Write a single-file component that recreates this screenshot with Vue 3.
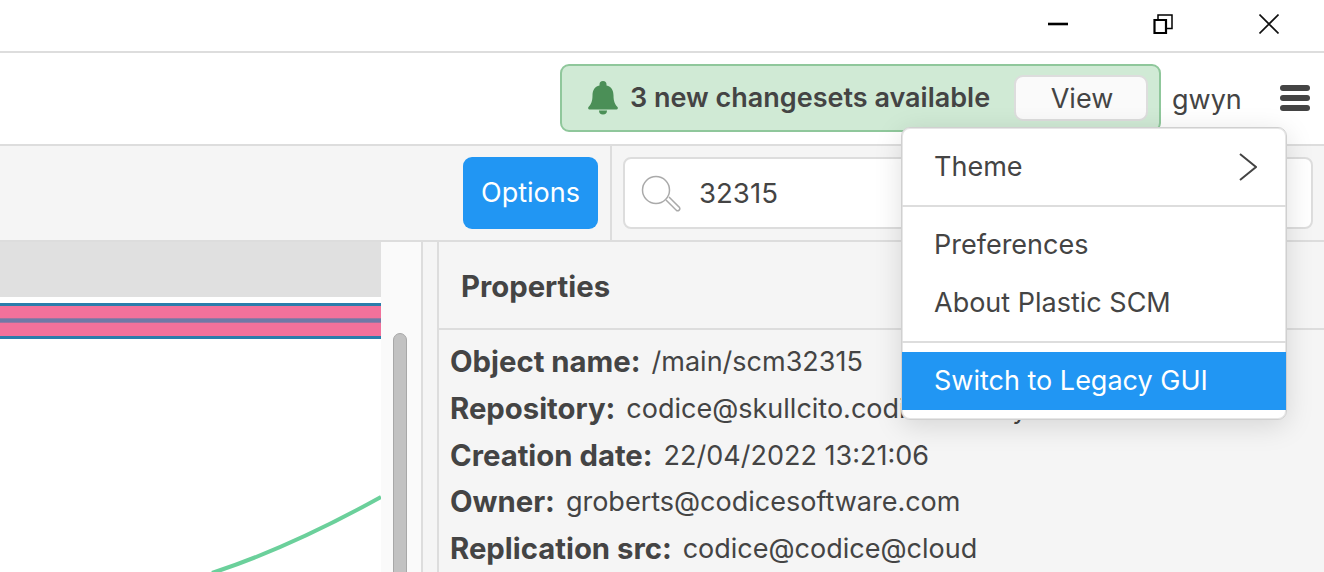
<script setup>
const rows = [
  { label: 'Object name:', value: '/main/scm32315' },
  { label: 'Repository:', value: 'codice@skullcito.codicefactory' },
  { label: 'Creation date:', value: '22/04/2022 13:21:06' },
  { label: 'Owner:', value: 'groberts@codicesoftware.com' },
  { label: 'Replication src:', value: 'codice@codice@cloud' },
]
</script>

<template>
  <div class="app">
    <header class="titlebar">
      <svg class="win min" width="20" height="20" viewBox="0 0 20 20"><path d="M0 10H20" stroke="#000" stroke-width="2.600" fill="none" /></svg>
      <svg class="win" width="20" height="20" viewBox="0 0 20 20"><path d="M1.500 6H13V19H1.500Z" stroke="#000" stroke-width="2.200" fill="none" /><path d="M5 5V1H19V14.500H13.500" stroke="#000" stroke-width="1.500" fill="none" /></svg>
      <svg class="win" width="20" height="20" viewBox="0 0 20 20"><path d="M0.500 0.500L19.500 19.500M19.500 0.500L0.500 19.500" stroke="#111" stroke-width="1.600" fill="none" /></svg>
    </header>

    <div class="topbar">
      <div class="banner">
        <svg class="bell" width="32" height="34" viewBox="0 0 32 34">
          <path d="M16 0a3.500 3.500 0 0 1 3.500 3.500v1c5 1.200 7 5 7 10 0 6 1.500 9 4 11.500.8.800.3 2.500-1 2.500H2.500c-1.300 0-1.800-1.700-1-2.500C4 23.500 5.500 20.500 5.500 14.500c0-5 2-8.800 7-10v-1A3.500 3.500 0 0 1 16 0Z M12 29.500h8a4 4 0 0 1-8 0Z" fill="#4b8f57" />
        </svg>
        <span class="banner-text">3 new changesets available</span>
        <button class="view">View</button>
      </div>
      <span class="user">gwyn</span>
      <div class="burger"><i></i><i></i><i></i></div>
    </div>

    <div class="toolbar">
      <button class="options">Options</button>
      <div class="divider"></div>
      <div class="search">
        <svg class="lens" width="40" height="38" viewBox="0 0 40 38">
          <circle cx="15" cy="15" r="13.500" fill="none" stroke="#aaa" stroke-width="1.500" />
          <path d="M25 25l10.500 10.500a2.200 2.200 0 0 0 3-3L28 22" fill="none" stroke="#aaa" stroke-width="1.500" />
        </svg>
        <span class="query">32315</span>
      </div>
    </div>

    <main class="main">
      <section class="canvas">
        <div class="band-grey"></div>
        <div class="band">
          <div class="pink"></div>
          <div class="mid"></div>
          <div class="pink lower"></div>
        </div>
        <svg class="curve" width="381" height="330" viewBox="0 0 381 330">
          <path d="M212 331C270 312 325 286 381 255" fill="none" stroke="#6bd09b" stroke-width="4" />
        </svg>
      </section>
      <div class="scrollstrip"><div class="thumb"></div></div>
      <div class="gutter"></div>
      <section class="props">
        <h2 class="props-title">Properties</h2>
        <div class="props-body">
          <div v-for="r in rows" :key="r.label" class="row">
            <b>{{ r.label }}</b><span>{{ r.value }}</span>
          </div>
        </div>
      </section>
    </main>

    <nav class="menu">
      <div class="item theme">
        <span>Theme</span>
        <svg width="18" height="28" viewBox="0 0 18 28"><path d="M1 1L17 14L1 27" fill="none" stroke="#444" stroke-width="2" /></svg>
      </div>
      <div class="sep first"></div>
      <div class="item">Preferences</div>
      <div class="item">About Plastic SCM</div>
      <div class="sep second"></div>
      <div class="item active">Switch to Legacy GUI</div>
    </nav>
  </div>
</template>

<style>
html, body { margin: 0; background: #fff; }
</style>

<style scoped>
.app {
  position: relative;
  width: 1324px;
  height: 572px;
  overflow: hidden;
  display: flex;
  flex-direction: column;
  font-family: Inter, "Liberation Sans", sans-serif;
  color: #444;
  background: #fff;
}
.titlebar {
  box-sizing: border-box;
  height: 53px;
  flex: none;
  display: flex;
  justify-content: flex-end;
  align-items: flex-start;
  gap: 86px;
  padding: 14px 45px 0 0;
  border-bottom: 2px solid #ddd;
}
.win { display: block; }
.min { margin-right: -1px; }
.topbar {
  box-sizing: border-box;
  height: 93px;
  flex: none;
  display: flex;
  align-items: flex-start;
  padding: 11px 14px 0 560px;
  border-bottom: 2px solid #ddd;
}
.banner {
  box-sizing: border-box;
  width: 601px;
  height: 68px;
  flex: none;
  display: flex;
  align-items: center;
  padding: 0 11px 0 25px;
  border: 2px solid #8fc79b;
  border-radius: 9px;
  background: #d0ead5;
}
.bell { flex: none; margin-right: 11px; }
.banner-text { font-size: 27px; font-weight: 600; white-space: nowrap; flex: 1; padding-bottom: 2px; }
.view {
  box-sizing: border-box;
  width: 134px;
  height: 46px;
  border: 2px solid #ddd;
  border-radius: 9px;
  background: #fafafa;
  font: 400 27px Inter, sans-serif;
  color: #444;
  padding: 0 0 0 2px;
}
.user { margin: 19px 0 0 11px; font-size: 27px; line-height: 34px; width: 108px; flex: none; }
.burger { display: flex; flex-direction: column; gap: 4px; margin-top: 21px; }
.burger i { display: block; width: 30px; height: 6px; border-radius: 3px; background: #444; }

.toolbar {
  box-sizing: border-box;
  height: 96px;
  flex: none;
  display: flex;
  justify-content: flex-end;
  align-items: stretch;
  background: #f5f5f5;
  border-bottom: 2px solid #ddd;
  padding-right: 11px;
}
.options {
  align-self: center;
  width: 135px;
  height: 72px;
  border: 0;
  border-radius: 9px;
  background: #2196f3;
  color: #fff;
  font: 400 27px Inter, sans-serif;
  padding: 0 0 2px;
}
.divider { width: 2px; background: #ddd; margin: 0 11px 0 12px; }
.search {
  box-sizing: border-box;
  align-self: center;
  width: 690px;
  height: 72px;
  background: #fff;
  border: 2px solid #ddd;
  border-radius: 8px;
  display: flex;
  align-items: center;
  padding-left: 16px;
}
.lens { flex: none; margin-right: 18px; margin-top: 1px; }
.query { font-size: 27.600px; }

.main { flex: 1; min-height: 0; display: flex; }
.canvas { position: relative; width: 381px; flex: none; overflow: hidden; background: #fff; }
.band-grey { height: 55px; background: #e0e0e0; }
.band {
  margin-top: 6px;
  border-top: 3px solid #2a7dab;
  border-bottom: 3px solid #2a7dab;
}
.pink { height: 12px; background: #f2719b; }
.pink.lower { height: 13px; }
.mid { height: 5px; background: linear-gradient(#b4749f, #6f79a6 25%, #6f79a6 75%, #b4749f); }
.curve { position: absolute; left: 0; top: 0; }
.scrollstrip { width: 40px; flex: none; background: #fafafa; border-right: 2px solid #ddd; }
.thumb {
  box-sizing: border-box;
  width: 14px;
  height: 300px;
  margin: 91px 0 0 12px;
  background: #c2c2c2;
  border: 1px solid #a8a8a8;
  border-radius: 7px 7px 0 0;
}
.gutter { width: 14px; flex: none; background: #f5f5f5; border-right: 2px solid #ddd; }
.props { flex: 1; min-width: 0; background: #f5f5f5; }
.props-title {
  box-sizing: border-box;
  height: 88px;
  margin: 0;
  padding: 2px 0 0 22px;
  display: flex;
  align-items: center;
  font-size: 29.300px;
  font-weight: 700;
  border-bottom: 2px solid #ddd;
}
.props-body { padding: 8.200px 0 0 11px; font-size: 27px; }
.row { height: 46.750px; display: flex; align-items: center; gap: 11px; white-space: nowrap; }
.row b { font-weight: 700; font-size: 29.300px; }

.menu {
  position: absolute;
  box-sizing: border-box;
  left: 901px;
  top: 127px;
  width: 386px;
  height: 293px;
  background: #fff;
  border: 1px solid #d0d0d0;
  border-radius: 9px;
  overflow: hidden;
  box-shadow: inset 0 0 0 1px #e6e6e6, 0 6px 28px rgba(0, 0, 0, 0.13);
  font-size: 27px;
}
.item {
  box-sizing: border-box;
  height: 58px;
  display: flex;
  align-items: center;
  justify-content: space-between;
  padding: 0 29px 2px 32px;
}
.theme { height: 77px; padding-bottom: 0; }
.sep { height: 2px; background: #ddd; }
.sep.first { margin-bottom: 9px; }
.sep.second { margin-top: 9px; margin-bottom: 9px; }
.active { background: #2196f3; color: #fff; }
</style>
